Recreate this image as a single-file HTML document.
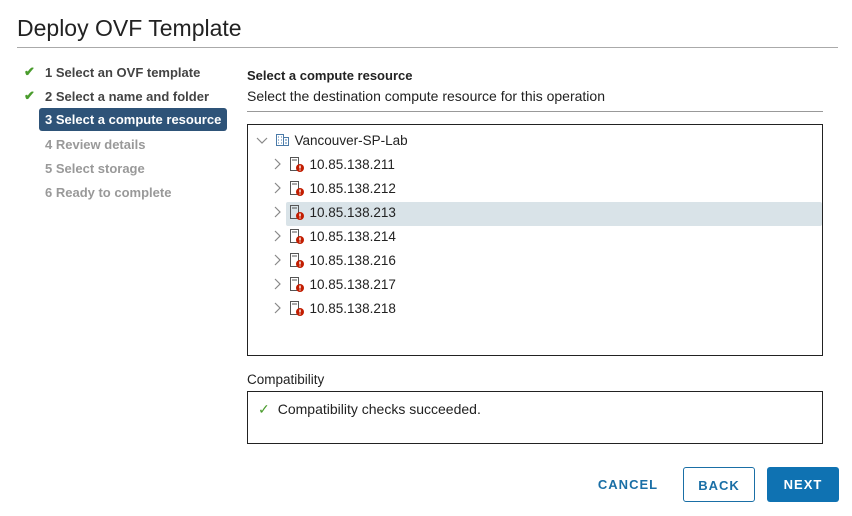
<!DOCTYPE html>
<html><head><style>
body{margin:0;width:852px;height:516px;background:#fff;font-family:"Liberation Sans",sans-serif;color:#222;position:relative;overflow:hidden}
.a{position:absolute}
.title{left:17px;top:15px;font-size:23px;color:#222}
.hr{left:17px;top:47px;width:821px;height:1px;background:#aaa}
.step{left:45px;font-size:13px;font-weight:bold;color:#444}
.step.dis{color:#999}
.chk{color:#4a9c2d;font-size:13px;left:24px;font-weight:bold}
.active{left:39px;top:108px;width:188px;height:23px;background:#2e5378;border-radius:3px;color:#fff;font-size:13px;font-weight:bold;line-height:23px;padding-left:6px;box-sizing:border-box}
.tree{left:247px;top:124px;width:576px;height:232px;border:1px solid #222;box-sizing:border-box}
.row{font-size:13.5px;color:#222;height:24px;line-height:24px}
.btn{font-size:13px;font-weight:bold;letter-spacing:1px;text-align:center;line-height:35px;height:35px;border-radius:3px;box-sizing:border-box}
</style></head><body>
<div class="a title">Deploy OVF Template</div>
<div class="a hr"></div>
<div class="a chk" style="top:64px">✔</div>
<div class="a step" style="top:65px">1 Select an OVF template</div>
<div class="a chk" style="top:88px">✔</div>
<div class="a step" style="top:89px">2 Select a name and folder</div>
<div class="a active">3 Select a compute resource</div>
<div class="a step dis" style="top:137px">4 Review details</div>
<div class="a step dis" style="top:161px">5 Select storage</div>
<div class="a step dis" style="top:185px">6 Ready to complete</div>

<div class="a" style="left:247px;top:68px;font-size:13px;font-weight:bold">Select a compute resource</div>
<div class="a" style="left:247px;top:88px;font-size:14px">Select the destination compute resource for this operation</div>
<div class="a" style="left:247px;top:111px;width:576px;height:1px;background:#999"></div>

<div class="a tree"></div>
<div class="a" style="left:286px;top:202px;width:536px;height:24px;background:#d9e3e8;border-radius:2px"></div>
<div class="a row" style="left:256px;top:129px"><svg width="12" height="12" style="vertical-align:-1px"><path d="M1 4 L6 9 L11 4" fill="none" stroke="#888" stroke-width="1.2"/></svg>
<svg width="15" height="15" style="vertical-align:-2px;margin-left:3px"><rect x="1.5" y="2.5" width="7" height="11" fill="none" stroke="#4a7aa8"/><rect x="8.5" y="5.5" width="5" height="8" fill="none" stroke="#4a7aa8"/><path d="M3 5h1M6 5h1M3 8h1M6 8h1M3 11h1M6 11h1M10 8h2M10 11h2" stroke="#4a7aa8"/></svg>
<span style="margin-left:1px">Vancouver-SP-Lab</span></div>
<div class="a" style="left:272px;top:153px">
<div class="row"><svg width="10" height="12" style="vertical-align:-1px"><path d="M3 1 L8 6 L3 11" fill="none" stroke="#888" stroke-width="1.2"/></svg> <svg width="17" height="16" style="vertical-align:-3px;margin-left:3px"><rect x="1.5" y="1.5" width="8" height="13" fill="none" stroke="#555"/><path d="M3 4h5" stroke="#555"/><circle cx="11" cy="12" r="4" fill="#c21d00"/><path d="M11 9.5v3M11 13.5v1" stroke="#fff" stroke-width="1.4"/></svg> 10.85.138.211</div>
<div class="row"><svg width="10" height="12" style="vertical-align:-1px"><path d="M3 1 L8 6 L3 11" fill="none" stroke="#888" stroke-width="1.2"/></svg> <svg width="17" height="16" style="vertical-align:-3px;margin-left:3px"><rect x="1.5" y="1.5" width="8" height="13" fill="none" stroke="#555"/><path d="M3 4h5" stroke="#555"/><circle cx="11" cy="12" r="4" fill="#c21d00"/><path d="M11 9.5v3M11 13.5v1" stroke="#fff" stroke-width="1.4"/></svg> 10.85.138.212</div>
<div class="row"><svg width="10" height="12" style="vertical-align:-1px"><path d="M3 1 L8 6 L3 11" fill="none" stroke="#888" stroke-width="1.2"/></svg> <svg width="17" height="16" style="vertical-align:-3px;margin-left:3px"><rect x="1.5" y="1.5" width="8" height="13" fill="none" stroke="#555"/><path d="M3 4h5" stroke="#555"/><circle cx="11" cy="12" r="4" fill="#c21d00"/><path d="M11 9.5v3M11 13.5v1" stroke="#fff" stroke-width="1.4"/></svg> 10.85.138.213</div>
<div class="row"><svg width="10" height="12" style="vertical-align:-1px"><path d="M3 1 L8 6 L3 11" fill="none" stroke="#888" stroke-width="1.2"/></svg> <svg width="17" height="16" style="vertical-align:-3px;margin-left:3px"><rect x="1.5" y="1.5" width="8" height="13" fill="none" stroke="#555"/><path d="M3 4h5" stroke="#555"/><circle cx="11" cy="12" r="4" fill="#c21d00"/><path d="M11 9.5v3M11 13.5v1" stroke="#fff" stroke-width="1.4"/></svg> 10.85.138.214</div>
<div class="row"><svg width="10" height="12" style="vertical-align:-1px"><path d="M3 1 L8 6 L3 11" fill="none" stroke="#888" stroke-width="1.2"/></svg> <svg width="17" height="16" style="vertical-align:-3px;margin-left:3px"><rect x="1.5" y="1.5" width="8" height="13" fill="none" stroke="#555"/><path d="M3 4h5" stroke="#555"/><circle cx="11" cy="12" r="4" fill="#c21d00"/><path d="M11 9.5v3M11 13.5v1" stroke="#fff" stroke-width="1.4"/></svg> 10.85.138.216</div>
<div class="row"><svg width="10" height="12" style="vertical-align:-1px"><path d="M3 1 L8 6 L3 11" fill="none" stroke="#888" stroke-width="1.2"/></svg> <svg width="17" height="16" style="vertical-align:-3px;margin-left:3px"><rect x="1.5" y="1.5" width="8" height="13" fill="none" stroke="#555"/><path d="M3 4h5" stroke="#555"/><circle cx="11" cy="12" r="4" fill="#c21d00"/><path d="M11 9.5v3M11 13.5v1" stroke="#fff" stroke-width="1.4"/></svg> 10.85.138.217</div>
<div class="row"><svg width="10" height="12" style="vertical-align:-1px"><path d="M3 1 L8 6 L3 11" fill="none" stroke="#888" stroke-width="1.2"/></svg> <svg width="17" height="16" style="vertical-align:-3px;margin-left:3px"><rect x="1.5" y="1.5" width="8" height="13" fill="none" stroke="#555"/><path d="M3 4h5" stroke="#555"/><circle cx="11" cy="12" r="4" fill="#c21d00"/><path d="M11 9.5v3M11 13.5v1" stroke="#fff" stroke-width="1.4"/></svg> 10.85.138.218</div>
</div>

<div class="a" style="left:247px;top:372px;font-size:13.5px">Compatibility</div>
<div class="a" style="left:247px;top:391px;width:576px;height:53px;border:1px solid #222;box-sizing:border-box"></div>
<div class="a" style="left:258px;top:401px;font-size:14px"><span style="color:#4a9c2d;margin-right:8px">✓</span>Compatibility checks succeeded.</div>

<div class="a btn" style="left:590px;top:467px;width:76px;color:#1a6fa6">CANCEL</div>
<div class="a btn" style="left:683px;top:467px;width:72px;border:1px solid #1a6fa6;color:#1a6fa6">BACK</div>
<div class="a btn" style="left:767px;top:467px;width:72px;background:#0f72b2;color:#fff">NEXT</div>
</body></html>
